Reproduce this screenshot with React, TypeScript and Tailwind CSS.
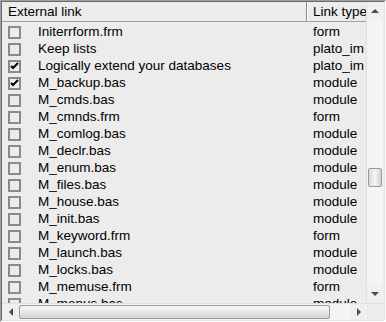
import React from 'react';

const rows: { name: string; type: string; checked?: boolean }[] = [
  { name: 'Initerrform.frm', type: 'form' },
  { name: 'Keep lists', type: 'plato_im' },
  { name: 'Logically extend your databases', type: 'plato_im', checked: true },
  { name: 'M_backup.bas', type: 'module', checked: true },
  { name: 'M_cmds.bas', type: 'module' },
  { name: 'M_cmnds.frm', type: 'form' },
  { name: 'M_comlog.bas', type: 'module' },
  { name: 'M_declr.bas', type: 'module' },
  { name: 'M_enum.bas', type: 'module' },
  { name: 'M_files.bas', type: 'module' },
  { name: 'M_house.bas', type: 'module' },
  { name: 'M_init.bas', type: 'module' },
  { name: 'M_keyword.frm', type: 'form' },
  { name: 'M_launch.bas', type: 'module' },
  { name: 'M_locks.bas', type: 'module' },
  { name: 'M_memuse.frm', type: 'form' },
  { name: 'M_menus.bas', type: 'module' },
];

function Check({ checked }: { checked?: boolean }) {
  return (
    <div className="w-[13px] h-[13px] border-2 border-[#8a8a8a] bg-[#ececec] flex items-center justify-center">
      {checked && (
        <svg width="9" height="9" viewBox="0 0 9 9">
          <path d="M1 4 L3 6 L8 1" stroke="#000" strokeWidth="2" fill="none" />
        </svg>
      )}
    </div>
  );
}

function Arrow({ dir }: { dir: 'up' | 'down' | 'left' | 'right' }) {
  const d = {
    up: 'M0 4 L4 0 L8 4 Z',
    down: 'M0 0 L8 0 L4 4 Z',
    left: 'M4 0 L4 8 L0 4 Z',
    right: 'M0 0 L4 4 L0 8 Z',
  }[dir];
  const vertical = dir === 'up' || dir === 'down';
  return (
    <svg width={vertical ? 8 : 4} height={vertical ? 4 : 8} viewBox={vertical ? '0 0 8 4' : '0 0 4 8'}>
      <path d={d} fill="#4a4a4a" />
    </svg>
  );
}

export default function App() {
  return (
    <div className="w-[386px] h-[322px] bg-[#ececec] border border-t-[#a0a0a0] border-l-[#a0a0a0] border-r-white border-b-white" style={{ fontFamily: '"Liberation Sans", Arial, sans-serif' }}>
      <div className="w-full h-full border border-t-[#696969] border-l-[#696969] border-r-[#e3e3e3] border-b-[#e3e3e3] flex flex-col">
        <div className="flex flex-1 min-h-0">
          {/* list area */}
          <div className="w-[364px] flex flex-col overflow-hidden">
            <div className="flex h-[20px] shrink-0 bg-[#ececec] border-b border-[#a0a0a0] text-[13.5px] text-black leading-none">
              <div className="w-[305px] h-full flex items-center pl-[6px] border-r border-[#8a8a8a]">External link</div>
              <div className="w-px h-full bg-white" />
              <div className="flex-1 h-full flex items-center pl-[5px] whitespace-nowrap overflow-hidden">Link type</div>
            </div>
            <div className="flex flex-col pt-[2px]">
              {rows.map((r) => (
                <div key={r.name} className="flex items-center h-[17px] shrink-0 text-[13.5px] text-black whitespace-nowrap">
                  <div className="w-[305px] flex items-center pl-[6px]">
                    <Check checked={r.checked} />
                    <span className="ml-[17px]">{r.name}</span>
                  </div>
                  <span className="pl-[6px]">{r.type}</span>
                </div>
              ))}
            </div>
          </div>
          {/* vertical scrollbar */}
          <div className="w-[17px] flex flex-col bg-[#f0f0f0] border-l border-[#e0e0e0]">
            <div className="h-[18px] flex items-center justify-center">
              <Arrow dir="up" />
            </div>
            <div className="flex-1 flex flex-col bg-[#f4f4f4]">
              <div className="h-[148px]" />
              <div className="h-[19px] mx-[1px] border border-[#9a9a9a] rounded-[2px] bg-gradient-to-r from-[#d8d8d8] via-[#f6f6f6] to-[#d0d0d0]" />
            </div>
            <div className="h-[18px] flex items-center justify-center">
              <Arrow dir="down" />
            </div>
          </div>
        </div>
        {/* horizontal scrollbar */}
        <div className="h-[17px] flex shrink-0 bg-[#f0f0f0] border-t border-[#e0e0e0]">
          <div className="w-[17px] flex items-center justify-center">
            <Arrow dir="left" />
          </div>
          <div className="flex-1 flex items-stretch bg-[#f4f4f4]">
            <div className="w-[311px] my-[1px] border border-[#9a9a9a] rounded-[2px] bg-gradient-to-b from-[#f6f6f6] via-[#e8e8e8] to-[#d2d2d2]" />
          </div>
          <div className="w-[17px] flex items-center justify-center">
            <Arrow dir="right" />
          </div>
          <div className="w-[17px] bg-[#ececec]" />
        </div>
      </div>
    </div>
  );
}
